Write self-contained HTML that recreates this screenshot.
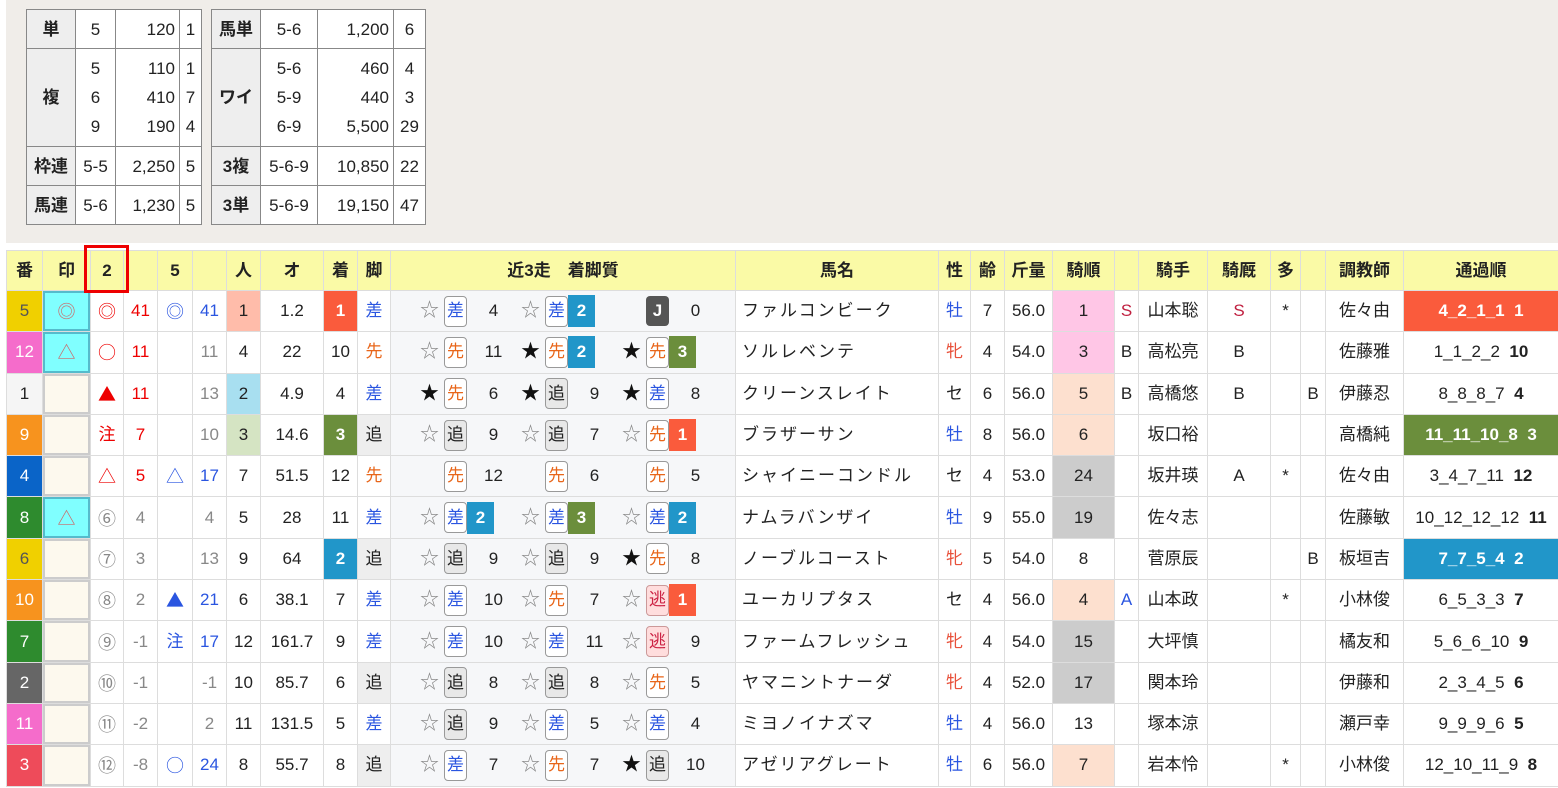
<!DOCTYPE html>
<html><head><meta charset="utf-8"><style>
*{box-sizing:border-box;margin:0;padding:0}
body{width:1558px;height:788px;background:#fff;font-family:"Liberation Sans","Noto Sans CJK JP",sans-serif;color:#222;position:relative;overflow:hidden}
.top{position:absolute;left:6px;top:0;width:1552px;height:243px;background:#f0ede9}
.pt{position:absolute;top:9px;border-collapse:collapse;font-size:17px;background:#fff}
.pt td{border:1px solid #888;padding:0 4px;text-align:right;line-height:29px}
.pt td.h{background:#eee;font-weight:bold;text-align:center;padding:0}
.pt td.c{text-align:center}
#m{position:absolute;left:6px;top:250px;border-collapse:collapse;table-layout:fixed;width:1552px;font-size:17px}
#m td{border:1px solid #ddd;height:41.3px;line-height:20px;text-align:center;padding:0;white-space:nowrap;overflow:hidden;vertical-align:middle}
#m tr.hd td{background:#fafaa6;height:40px;font-weight:bold}
.f1{background:#f5f5f5}.fy{background:#f0d000;color:#555}.fp{background:#f56ccb;color:#fff}.fo{background:#f7931e;color:#fff}.fb{background:#0a64c8;color:#fff}.fg{background:#2e8b2e;color:#fff}.fk{background:#666;color:#fff}.fr{background:#ee4b5a;color:#fff}
.in{background:#fdf9ee;box-shadow:inset 2px 2px 0 #ccc,inset -2px -2px 0 #ccc}
.cy{background:#80ffff;box-shadow:inset 2px 2px 0 #5bc,inset -2px -2px 0 #5bc;color:#c66}
.mk{font-family:"Noto Sans CJK JP",sans-serif;font-size:18px}
.rd{color:#e00}.bl{color:#2a55e0}.gy{color:#888}.or{color:#e8661a}
.p1{background:#ffbcaa}.p2{background:#a8dff0}.p3{background:#d5e4c3}
.R1{background:#fa5b3c;color:#fff;font-weight:bold}.R2{background:#2196c9;color:#fff;font-weight:bold}.R3{background:#6b8e3c;color:#fff;font-weight:bold}
.ga{background:#eee}
#m td.rc{background:#f6f7f9;text-align:left}
.r{display:flex;padding-left:24px;align-items:center}
.s{width:29px;text-align:center;color:#888;font-size:19px;font-style:normal;flex:none}
.s.b{color:#111}
.k{flex:none;width:23px;height:31px;border:1px solid #999;border-radius:4px;display:flex;align-items:center;justify-content:center;background:#fff;text-decoration:none}
.k.sa{color:#2a55e0}.k.se{color:#e8661a}.k.oi{background:#e8e8e8;color:#222}.k.ni{background:#fdd;color:#c24;border-color:#c99}
.v{flex:none;width:27px;height:32px;display:flex;align-items:center;justify-content:center;text-decoration:none;margin-right:22px;position:relative;left:13px}
.v.R1,.v.R2,.v.R3{left:0}
.J{flex:none;background:#555;color:#fff;border-radius:4px;width:23px;height:30px;display:flex;align-items:center;justify-content:center;font-weight:bold;margin-left:29px}
.nm{text-align:left!important;padding-left:6px!important;letter-spacing:2px}
.pk{background:#ffc6e6}.pc{background:#fde0cf}.gr{background:#ccc}
.red2{color:#c02040}
.box{position:absolute;left:84px;top:245px;width:45px;height:48px;border:3px solid #e00}
</style></head><body>
<div class="top"></div>
<table class="pt" style="left:26px">
<tr style="height:39px"><td class="h" style="width:49px">単</td><td class="c" style="width:40px">5</td><td style="width:64px">120</td><td class="c" style="width:22px;padding:0">1</td></tr>
<tr style="height:98px"><td class="h">複</td><td class="c">5<br>6<br>9</td><td>110<br>410<br>190</td><td class="c" style="padding:0">1<br>7<br>4</td></tr>
<tr style="height:39px"><td class="h">枠連</td><td class="c" style="padding:0">5-5</td><td>2,250</td><td class="c" style="padding:0">5</td></tr>
<tr style="height:39px"><td class="h">馬連</td><td class="c" style="padding:0">5-6</td><td>1,230</td><td class="c" style="padding:0">5</td></tr>
</table>
<table class="pt" style="left:211px">
<tr style="height:39px"><td class="h" style="width:49px">馬単</td><td class="c" style="width:57px">5-6</td><td style="width:76px">1,200</td><td class="c" style="width:32px;padding:0">6</td></tr>
<tr style="height:98px"><td class="h">ワイ</td><td class="c">5-6<br>5-9<br>6-9</td><td>460<br>440<br>5,500</td><td class="c" style="padding:0">4<br>3<br>29</td></tr>
<tr style="height:39px"><td class="h">3複</td><td class="c" style="padding:0">5-6-9</td><td>10,850</td><td class="c" style="padding:0">22</td></tr>
<tr style="height:39px"><td class="h">3単</td><td class="c" style="padding:0">5-6-9</td><td>19,150</td><td class="c" style="padding:0">47</td></tr>
</table>
<table id="m">
<colgroup><col style="width:36px"><col style="width:48px"><col style="width:33px"><col style="width:34px"><col style="width:35px"><col style="width:34px"><col style="width:34px"><col style="width:63px"><col style="width:34px"><col style="width:33px"><col style="width:345px"><col style="width:203px"><col style="width:32px"><col style="width:34px"><col style="width:48px"><col style="width:62px"><col style="width:24px"><col style="width:69px"><col style="width:63px"><col style="width:30px"><col style="width:25px"><col style="width:78px"><col style="width:155px"></colgroup>
<tr class="hd"><td>番</td><td>印</td><td>2</td><td></td><td>5</td><td></td><td>人</td><td>オ</td><td>着</td><td>脚</td><td>近3走　着脚質</td><td>馬名</td><td>性</td><td>齢</td><td>斤量</td><td>騎順</td><td></td><td>騎手</td><td>騎厩</td><td>多</td><td></td><td>調教師</td><td>通過順</td></tr>
<tr><td class="fy">5</td><td class="cy mk">◎</td><td class="rd mk">◎</td><td class="rd">41</td><td class="bl mk">◎</td><td class="bl">41</td><td class="p1">1</td><td>1.2</td><td class="R1">1</td><td class="bl">差</td><td class="rc"><div class="r"><i class="s">☆</i><u class="k sa">差</u><u class="v">4</u><i class="s">☆</i><u class="k sa">差</u><u class="v R2">2</u><span class="J">J</span><u class="v">0</u></div></td><td class="nm">ファルコンビーク</td><td class="bl">牡</td><td>7</td><td>56.0</td><td class="pk">1</td><td class="red2">S</td><td>山本聡</td><td class="red2">S</td><td>*</td><td></td><td>佐々由</td><td class="R1">4_2_1_1&nbsp; 1</td></tr>
<tr><td class="fp">12</td><td class="cy mk">△</td><td class="rd mk">○</td><td class="rd">11</td><td></td><td class="gy">11</td><td>4</td><td>22</td><td>10</td><td class="or">先</td><td class="rc"><div class="r"><i class="s">☆</i><u class="k se">先</u><u class="v">11</u><i class="s b">★</i><u class="k se">先</u><u class="v R2">2</u><i class="s b">★</i><u class="k se">先</u><u class="v R3">3</u></div></td><td class="nm">ソルレベンテ</td><td style="color:#e8503a">牝</td><td>4</td><td>54.0</td><td class="pk">3</td><td>B</td><td>高松亮</td><td>B</td><td></td><td></td><td>佐藤雅</td><td>1_1_2_2&nbsp; <b>10</b></td></tr>
<tr><td class="f1">1</td><td class="in"></td><td class="rd mk">▲</td><td class="rd">11</td><td></td><td class="gy">13</td><td class="p2">2</td><td>4.9</td><td>4</td><td class="bl">差</td><td class="rc"><div class="r"><i class="s b">★</i><u class="k se">先</u><u class="v">6</u><i class="s b">★</i><u class="k oi">追</u><u class="v">9</u><i class="s b">★</i><u class="k sa">差</u><u class="v">8</u></div></td><td class="nm">クリーンスレイト</td><td>セ</td><td>6</td><td>56.0</td><td class="pc">5</td><td>B</td><td>高橋悠</td><td>B</td><td></td><td>B</td><td>伊藤忍</td><td>8_8_8_7&nbsp; <b>4</b></td></tr>
<tr><td class="fo">9</td><td class="in"></td><td class="rd">注</td><td class="rd">7</td><td></td><td class="gy">10</td><td class="p3">3</td><td>14.6</td><td class="R3">3</td><td class="ga">追</td><td class="rc"><div class="r"><i class="s">☆</i><u class="k oi">追</u><u class="v">9</u><i class="s">☆</i><u class="k oi">追</u><u class="v">7</u><i class="s">☆</i><u class="k se">先</u><u class="v R1">1</u></div></td><td class="nm">ブラザーサン</td><td class="bl">牡</td><td>8</td><td>56.0</td><td class="pc">6</td><td></td><td>坂口裕</td><td></td><td></td><td></td><td>高橋純</td><td class="R3">11_11_10_8&nbsp; 3</td></tr>
<tr><td class="fb">4</td><td class="in"></td><td class="rd mk">△</td><td class="rd">5</td><td class="bl mk">△</td><td class="bl">17</td><td>7</td><td>51.5</td><td>12</td><td class="or">先</td><td class="rc"><div class="r"><i class="s"></i><u class="k se">先</u><u class="v">12</u><i class="s"></i><u class="k se">先</u><u class="v">6</u><i class="s"></i><u class="k se">先</u><u class="v">5</u></div></td><td class="nm">シャイニーコンドル</td><td>セ</td><td>4</td><td>53.0</td><td class="gr">24</td><td></td><td>坂井瑛</td><td>A</td><td>*</td><td></td><td>佐々由</td><td>3_4_7_11&nbsp; <b>12</b></td></tr>
<tr><td class="fg">8</td><td class="cy mk">△</td><td class="gy mk">⑥</td><td class="gy">4</td><td></td><td class="gy">4</td><td>5</td><td>28</td><td>11</td><td class="bl">差</td><td class="rc"><div class="r"><i class="s">☆</i><u class="k sa">差</u><u class="v R2">2</u><i class="s">☆</i><u class="k sa">差</u><u class="v R3">3</u><i class="s">☆</i><u class="k sa">差</u><u class="v R2">2</u></div></td><td class="nm">ナムラバンザイ</td><td class="bl">牡</td><td>9</td><td>55.0</td><td class="gr">19</td><td></td><td>佐々志</td><td></td><td></td><td></td><td>佐藤敏</td><td>10_12_12_12&nbsp; <b>11</b></td></tr>
<tr><td class="fy">6</td><td class="in"></td><td class="gy mk">⑦</td><td class="gy">3</td><td></td><td class="gy">13</td><td>9</td><td>64</td><td class="R2">2</td><td class="ga">追</td><td class="rc"><div class="r"><i class="s">☆</i><u class="k oi">追</u><u class="v">9</u><i class="s">☆</i><u class="k oi">追</u><u class="v">9</u><i class="s b">★</i><u class="k se">先</u><u class="v">8</u></div></td><td class="nm">ノーブルコースト</td><td style="color:#e8503a">牝</td><td>5</td><td>54.0</td><td>8</td><td></td><td>菅原辰</td><td></td><td></td><td>B</td><td>板垣吉</td><td class="R2">7_7_5_4&nbsp; 2</td></tr>
<tr><td class="fo">10</td><td class="in"></td><td class="gy mk">⑧</td><td class="gy">2</td><td class="bl mk">▲</td><td class="bl">21</td><td>6</td><td>38.1</td><td>7</td><td class="bl">差</td><td class="rc"><div class="r"><i class="s">☆</i><u class="k sa">差</u><u class="v">10</u><i class="s">☆</i><u class="k se">先</u><u class="v">7</u><i class="s">☆</i><u class="k ni">逃</u><u class="v R1">1</u></div></td><td class="nm">ユーカリプタス</td><td>セ</td><td>4</td><td>56.0</td><td class="pc">4</td><td class="bl">A</td><td>山本政</td><td></td><td>*</td><td></td><td>小林俊</td><td>6_5_3_3&nbsp; <b>7</b></td></tr>
<tr><td class="fg">7</td><td class="in"></td><td class="gy mk">⑨</td><td class="gy">-1</td><td class="bl">注</td><td class="bl">17</td><td>12</td><td>161.7</td><td>9</td><td class="bl">差</td><td class="rc"><div class="r"><i class="s">☆</i><u class="k sa">差</u><u class="v">10</u><i class="s">☆</i><u class="k sa">差</u><u class="v">11</u><i class="s">☆</i><u class="k ni">逃</u><u class="v">9</u></div></td><td class="nm">ファームフレッシュ</td><td style="color:#e8503a">牝</td><td>4</td><td>54.0</td><td class="gr">15</td><td></td><td>大坪慎</td><td></td><td></td><td></td><td>橘友和</td><td>5_6_6_10&nbsp; <b>9</b></td></tr>
<tr><td class="fk">2</td><td class="in"></td><td class="gy mk">⑩</td><td class="gy">-1</td><td></td><td class="gy">-1</td><td>10</td><td>85.7</td><td>6</td><td class="ga">追</td><td class="rc"><div class="r"><i class="s">☆</i><u class="k oi">追</u><u class="v">8</u><i class="s">☆</i><u class="k oi">追</u><u class="v">8</u><i class="s">☆</i><u class="k se">先</u><u class="v">5</u></div></td><td class="nm">ヤマニントナーダ</td><td style="color:#e8503a">牝</td><td>4</td><td>52.0</td><td class="gr">17</td><td></td><td>関本玲</td><td></td><td></td><td></td><td>伊藤和</td><td>2_3_4_5&nbsp; <b>6</b></td></tr>
<tr><td class="fp">11</td><td class="in"></td><td class="gy mk">⑪</td><td class="gy">-2</td><td></td><td class="gy">2</td><td>11</td><td>131.5</td><td>5</td><td class="bl">差</td><td class="rc"><div class="r"><i class="s">☆</i><u class="k oi">追</u><u class="v">9</u><i class="s">☆</i><u class="k sa">差</u><u class="v">5</u><i class="s">☆</i><u class="k sa">差</u><u class="v">4</u></div></td><td class="nm">ミヨノイナズマ</td><td class="bl">牡</td><td>4</td><td>56.0</td><td>13</td><td></td><td>塚本涼</td><td></td><td></td><td></td><td>瀬戸幸</td><td>9_9_9_6&nbsp; <b>5</b></td></tr>
<tr><td class="fr">3</td><td class="in"></td><td class="gy mk">⑫</td><td class="gy">-8</td><td class="bl mk">○</td><td class="bl">24</td><td>8</td><td>55.7</td><td>8</td><td class="ga">追</td><td class="rc"><div class="r"><i class="s">☆</i><u class="k sa">差</u><u class="v">7</u><i class="s">☆</i><u class="k se">先</u><u class="v">7</u><i class="s b">★</i><u class="k oi">追</u><u class="v">10</u></div></td><td class="nm">アゼリアグレート</td><td class="bl">牡</td><td>6</td><td>56.0</td><td class="pc">7</td><td></td><td>岩本怜</td><td></td><td>*</td><td></td><td>小林俊</td><td>12_10_11_9&nbsp; <b>8</b></td></tr>
</table>
<div class="box"></div>
</body></html>
